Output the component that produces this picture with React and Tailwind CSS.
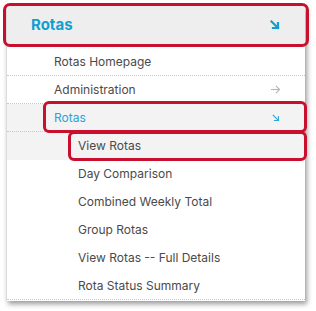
const ArrowDownRight = ({ className, strokeWidth = 2 }) => (
    <svg viewBox="0 0 10 10" className={className} fill="none" stroke="currentColor" strokeWidth={strokeWidth} strokeLinecap="square">
        <path d="M1.5 1.5 L8 8" />
        <path d="M8 3 L8 8 L3 8" />
    </svg>
);

const ArrowRight = ({ className }) => (
    <svg viewBox="0 0 12 10" className={className} fill="none" stroke="currentColor" strokeWidth="1.2">
        <path d="M1 5 H10.5" />
        <path d="M6.5 1 L10.5 5 L6.5 9" />
    </svg>
);

const subItems = [
    "Day Comparison",
    "Combined Weekly Total",
    "Group Rotas",
    "View Rotas -- Full Details",
    "Rota Status Summary",
];

const Row = ({ children, className = "", dotted = false }) => (
    <div className={`h-[28px] flex items-center ${dotted ? "border-b border-dotted border-[#c8c8c8]" : ""} ${className}`}>
        {children}
    </div>
);

export default function App() {
    return (
        <div className="relative w-[316px] h-[311px] bg-white overflow-hidden text-[12px] text-[#4a4a4a]" style={{ fontFamily: "Inter, 'Noto Sans', sans-serif" }}>
            <div className="ml-[6px] mt-[6px] w-[299px] h-[295px] bg-white border-l border-[#dcdcdc] shadow-[2px_3px_5px_rgba(0,0,0,0.4)]">
                <div className="h-[38px] bg-[#eeeeee] flex items-center justify-between pl-[24px] pr-[25px]">
                    <span className="text-[15px] font-bold text-[#119fd0]">Rotas</span>
                    <ArrowDownRight className="w-[10px] h-[10px] text-[#119fd0]" strokeWidth={2.2} />
                </div>
                <div className="pt-[4px]">
                    <Row dotted className="pl-[47px]">Rotas Homepage</Row>
                    <Row dotted className="pl-[47px] pr-[24px] justify-between">
                        <span>Administration</span>
                        <ArrowRight className="w-[11px] h-[9px] text-[#b5b5b5]" />
                    </Row>
                    <Row dotted className="pl-[47px] pr-[25px] justify-between bg-[#f3f3f3]">
                        <span className="text-[#2ba4d6]">Rotas</span>
                        <ArrowDownRight className="w-[8px] h-[8px] text-[#2ba4d6]" strokeWidth={1.3} />
                    </Row>
                    <Row className="pl-[71px] bg-[#f3f3f3]">View Rotas</Row>
                    {subItems.map((item, i) => (
                        <Row key={item} dotted={i === subItems.length - 1} className="pl-[71px]">{item}</Row>
                    ))}
                </div>
            </div>

            {/* annotation boxes */}
            <div className="absolute left-[3px] top-[3px] w-[306px] h-[44px] border-[3px] border-[#c8102e] rounded-[7px]" />
            <div className="absolute left-[43px] top-[101px] w-[264px] h-[32px] border-[3px] border-[#c8102e] rounded-[6px]" />
            <div className="absolute left-[68px] top-[131px] w-[239px] h-[30px] border-[3px] border-[#c8102e] rounded-[6px]" />
        </div>
    );
}
